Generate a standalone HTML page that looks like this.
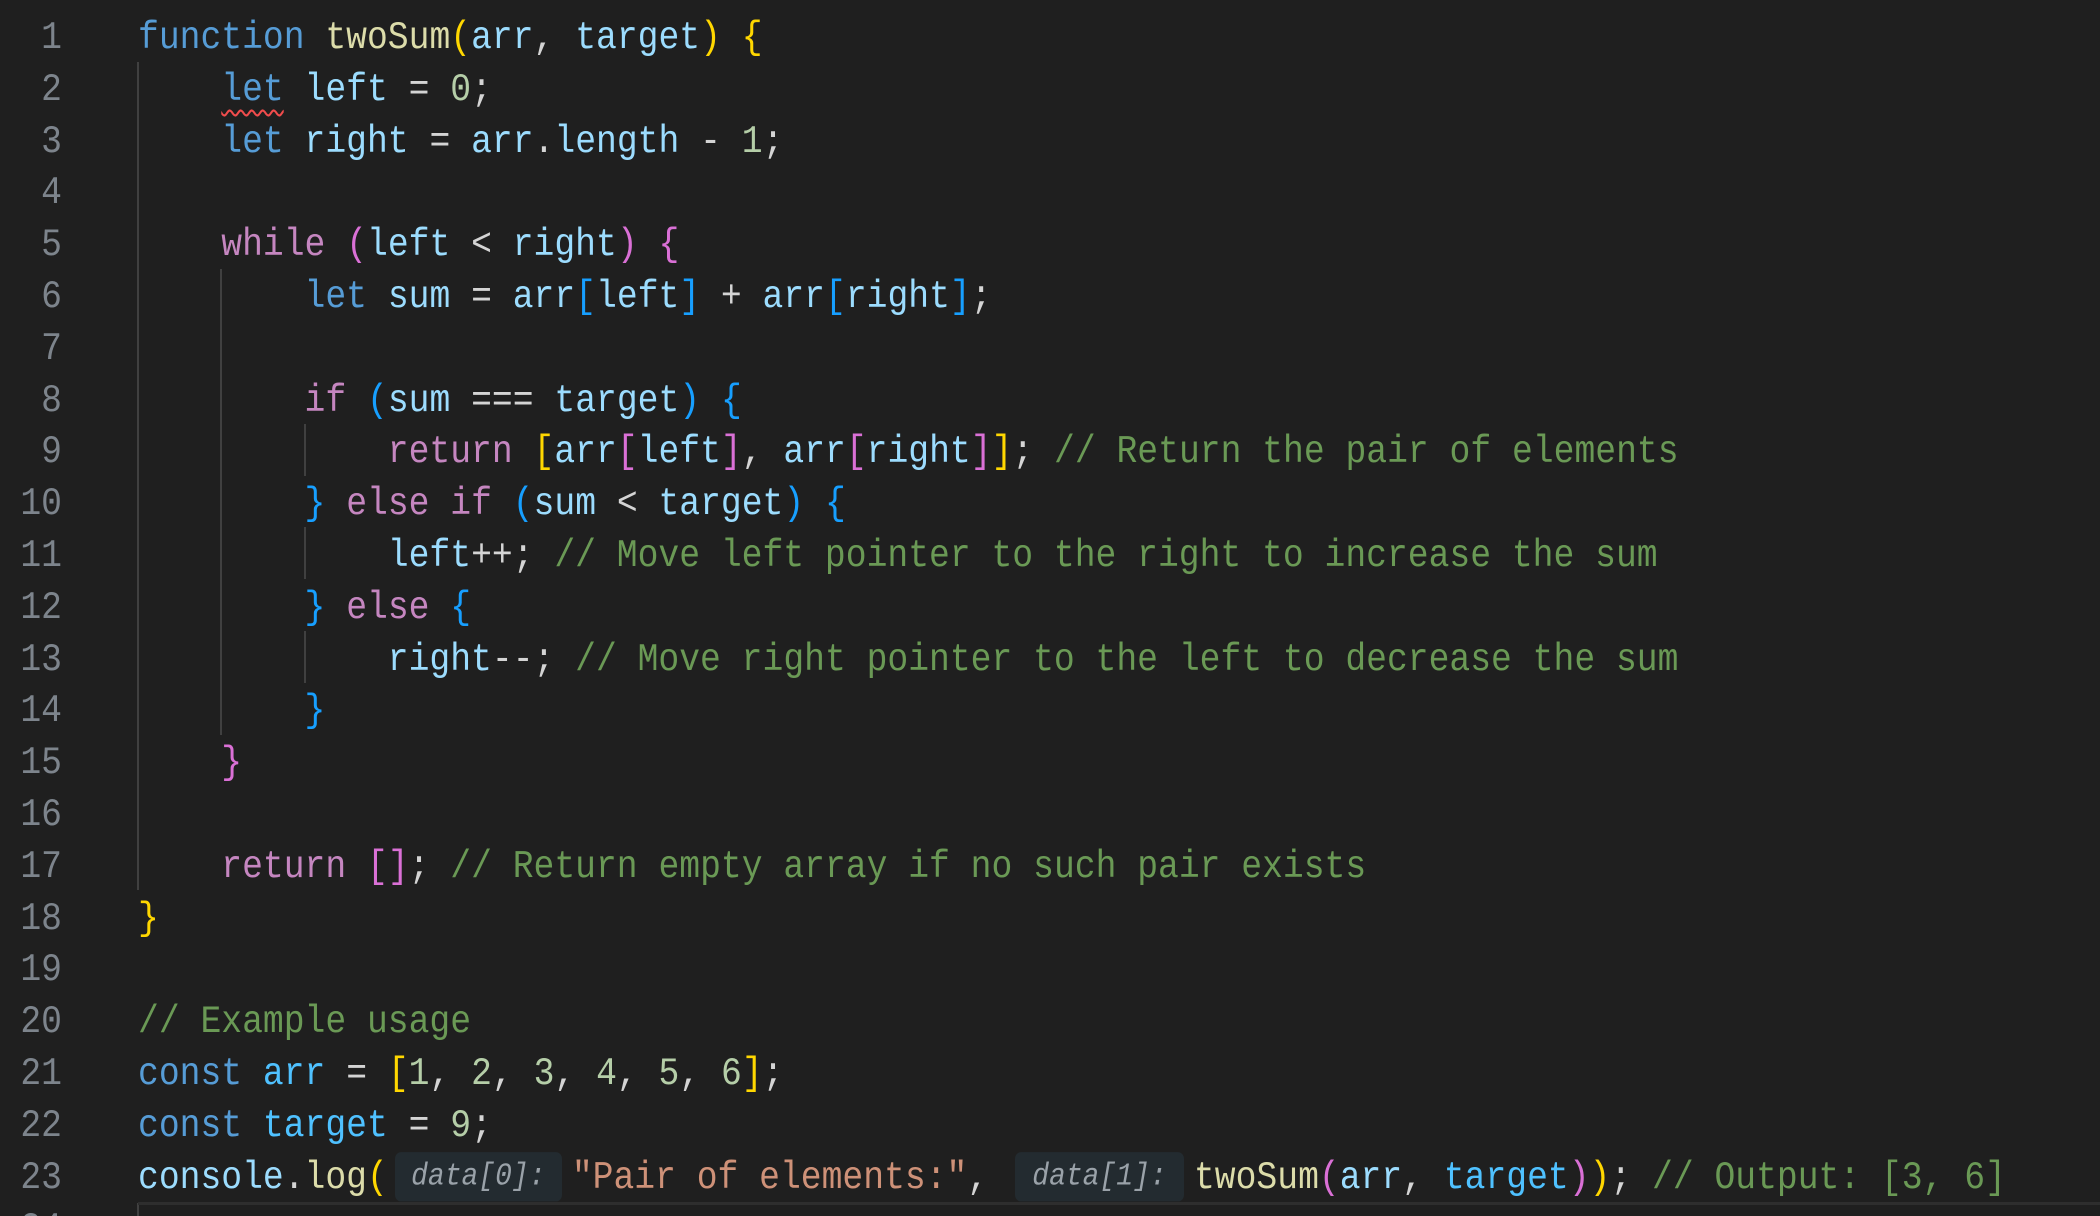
<!DOCTYPE html>
<html><head><meta charset="utf-8"><style>
html,body{margin:0;padding:0;background:#1f1f1f;width:2100px;height:1216px;overflow:hidden}
body{font-family:"Liberation Mono",monospace;font-size:34.7px;color:#d4d4d4;position:relative}
.l{position:absolute;left:0;height:51.8px;line-height:51.8px;white-space:pre;width:2100px;transform:scaleY(1.12);transform-origin:50% 50%}
.n{position:absolute;left:0;width:62px;text-align:right;color:#7d848c}
.c{position:absolute;left:138px}
.k{color:#569cd6}.p{color:#c586c0}.v{color:#9cdcfe}.f{color:#dcdcaa}.num{color:#b5cea8}
.cm{color:#6a9955}.s{color:#ce9178}.y{color:#ffd700}.m{color:#da70d6}.b{color:#179fff}.cs{color:#4fc1ff}
.g{position:absolute;width:2px;background:#404040}
.h{display:inline-block;background:#232b30;color:#9aa2a9;font-style:italic;font-size:28px;height:44px;line-height:46px;border-radius:6px;text-align:center;vertical-align:middle;position:relative;top:-1px}
.sq{text-decoration:underline wavy #f14c4c;text-decoration-thickness:2px;text-underline-offset:8px}
</style></head><body>
<div class="g" style="left:137px;top:62px;height:828px"></div>
<div class="g" style="left:220px;top:269px;height:466px"></div>
<div class="g" style="left:304px;top:424px;height:52px"></div>
<div class="g" style="left:304px;top:527px;height:52px"></div>
<div class="g" style="left:304px;top:631px;height:52px"></div>
<div class="g" style="left:137px;top:1203px;height:13px"></div>
<div style="position:absolute;left:138px;top:1202px;width:1962px;height:3px;background:#2e2e2e"></div>
<div style="position:absolute;left:0;top:3px;width:2100px;height:1216px">
<div class="l" style="top:10px"><span class="n">1</span><span class="c"><span class="k">function</span> <span class="f">twoSum</span><span class="y">(</span><span class="v">arr</span>, <span class="v">target</span><span class="y">)</span> <span class="y">{</span></span></div>
<div class="l" style="top:61.8px"><span class="n">2</span><span class="c">    <span class="k sq">let</span> <span class="v">left</span> = <span class="num">0</span>;</span></div>
<div class="l" style="top:113.6px"><span class="n">3</span><span class="c">    <span class="k">let</span> <span class="v">right</span> = <span class="v">arr</span>.<span class="v">length</span> - <span class="num">1</span>;</span></div>
<div class="l" style="top:165.4px"><span class="n">4</span></div>
<div class="l" style="top:217.2px"><span class="n">5</span><span class="c">    <span class="p">while</span> <span class="m">(</span><span class="v">left</span> &lt; <span class="v">right</span><span class="m">)</span> <span class="m">{</span></span></div>
<div class="l" style="top:269px"><span class="n">6</span><span class="c">        <span class="k">let</span> <span class="v">sum</span> = <span class="v">arr</span><span class="b">[</span><span class="v">left</span><span class="b">]</span> + <span class="v">arr</span><span class="b">[</span><span class="v">right</span><span class="b">]</span>;</span></div>
<div class="l" style="top:320.8px"><span class="n">7</span></div>
<div class="l" style="top:372.6px"><span class="n">8</span><span class="c">        <span class="p">if</span> <span class="b">(</span><span class="v">sum</span> === <span class="v">target</span><span class="b">)</span> <span class="b">{</span></span></div>
<div class="l" style="top:424.4px"><span class="n">9</span><span class="c">            <span class="p">return</span> <span class="y">[</span><span class="v">arr</span><span class="m">[</span><span class="v">left</span><span class="m">]</span>, <span class="v">arr</span><span class="m">[</span><span class="v">right</span><span class="m">]</span><span class="y">]</span>; <span class="cm">// Return the pair of elements</span></span></div>
<div class="l" style="top:476.2px"><span class="n">10</span><span class="c">        <span class="b">}</span> <span class="p">else if</span> <span class="b">(</span><span class="v">sum</span> &lt; <span class="v">target</span><span class="b">)</span> <span class="b">{</span></span></div>
<div class="l" style="top:528px"><span class="n">11</span><span class="c">            <span class="v">left</span>++; <span class="cm">// Move left pointer to the right to increase the sum</span></span></div>
<div class="l" style="top:579.8px"><span class="n">12</span><span class="c">        <span class="b">}</span> <span class="p">else</span> <span class="b">{</span></span></div>
<div class="l" style="top:631.6px"><span class="n">13</span><span class="c">            <span class="v">right</span>--; <span class="cm">// Move right pointer to the left to decrease the sum</span></span></div>
<div class="l" style="top:683.4px"><span class="n">14</span><span class="c">        <span class="b">}</span></span></div>
<div class="l" style="top:735.2px"><span class="n">15</span><span class="c">    <span class="m">}</span></span></div>
<div class="l" style="top:787px"><span class="n">16</span></div>
<div class="l" style="top:838.8px"><span class="n">17</span><span class="c">    <span class="p">return</span> <span class="m">[]</span>; <span class="cm">// Return empty array if no such pair exists</span></span></div>
<div class="l" style="top:890.6px"><span class="n">18</span><span class="c"><span class="y">}</span></span></div>
<div class="l" style="top:942.4px"><span class="n">19</span></div>
<div class="l" style="top:994.2px"><span class="n">20</span><span class="c"><span class="cm">// Example usage</span></span></div>
<div class="l" style="top:1046px"><span class="n">21</span><span class="c"><span class="k">const</span> <span class="cs">arr</span> = <span class="y">[</span><span class="num">1</span>, <span class="num">2</span>, <span class="num">3</span>, <span class="num">4</span>, <span class="num">5</span>, <span class="num">6</span><span class="y">]</span>;</span></div>
<div class="l" style="top:1097.8px"><span class="n">22</span><span class="c"><span class="k">const</span> <span class="cs">target</span> = <span class="num">9</span>;</span></div>
<div class="l" style="top:1149.6px"><span class="n">23</span><span class="c"><span class="v">console</span>.<span class="f">log</span><span class="y">(</span><span class="h" style="width:167px;margin-left:7px;margin-right:10px">data[0]:</span><span class="s">"Pair of elements:"</span>, <span class="h" style="width:169px;margin-left:6px;margin-right:10px">data[1]:</span><span class="f">twoSum</span><span class="m">(</span><span class="v">arr</span>, <span class="cs">target</span><span class="m">)</span><span class="y">)</span>; <span class="cm">// Output: [3, 6]</span></span></div>
<div class="l" style="top:1201.4px"><span class="n">24</span></div>
</div>
</body></html>
